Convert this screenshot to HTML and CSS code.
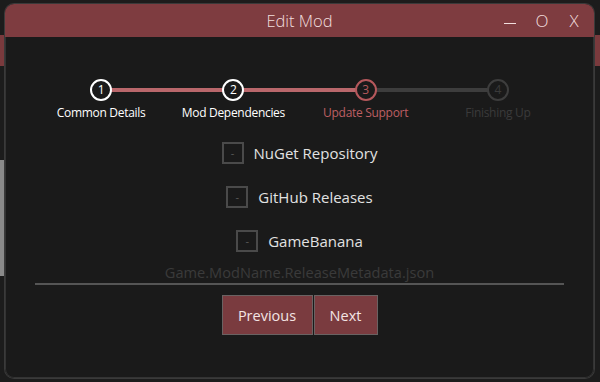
FILE: index.html
```html
<!DOCTYPE html>
<html lang="en">
<head>
<meta charset="utf-8">
<title>Edit Mod</title>
<link rel="stylesheet" href="styles.css">
</head>
<body>
<div class="window">
  <header class="titlebar">
    <div class="tb-side"></div>
    <div class="tb-title">Edit Mod</div>
    <div class="tb-controls">
      <span class="ctl ctl-min"><span class="dash"></span></span>
      <span class="ctl">O</span>
      <span class="ctl">X</span>
    </div>
  </header>
  <main class="content">
    <ol class="stepper">
      <li class="step done"><span class="circle">1</span><span class="label">Common Details</span></li>
      <li class="step done"><span class="circle">2</span><span class="label">Mod Dependencies</span></li>
      <li class="step current"><span class="circle">3</span><span class="label">Update Support</span></li>
      <li class="step todo"><span class="circle">4</span><span class="label">Finishing Up</span></li>
    </ol>
    <div class="options">
      <label class="option"><span class="box">-</span><span class="opt-text">NuGet Repository</span></label>
      <label class="option"><span class="box">-</span><span class="opt-text">GitHub Releases</span></label>
      <label class="option"><span class="box">-</span><span class="opt-text">GameBanana</span></label>
    </div>
    <div class="textbox">Game.ModName.ReleaseMetadata.json</div>
    <div class="buttons">
      <button class="btn btn-prev">Previous</button>
      <button class="btn btn-next">Next</button>
    </div>
  </main>
</div>
</body>
</html>
```
FILE: styles.css
```css
html, body {
  margin: 0;
  padding: 0;
}
body {
  width: 600px;
  height: 382px;
  overflow: hidden;
  background:
    linear-gradient(to bottom, transparent 0, transparent 35px, #7a3a3d 35px, #7a3a3d 66px, transparent 66px),
    linear-gradient(to bottom, transparent 0, transparent 160px, #8a8a8a 160px, #8a8a8a 276px, transparent 276px) left / 5px 100% no-repeat,
    #1c1c1c;
  font-family: "Open Sans", "Noto Sans", sans-serif;
  padding-top: 4px;
  box-sizing: border-box;
}
.window {
  margin-left: 5px;
  width: 589px;
  height: 374px;
  border-radius: 9px;
  overflow: hidden;
  background: #1a1a1a;
  box-shadow: 0 0 0 1px #3a3a3a;
  display: flex;
  flex-direction: column;
}
.titlebar {
  height: 33px;
  flex: none;
  background: #7e3c40;
  display: grid;
  grid-template-columns: 1fr auto 1fr;
  align-items: center;
  color: #f1dede;
}
.tb-title {
  font-size: 16.5px;
  font-weight: 300;
  padding-bottom: 1px;
}
.tb-controls {
  display: flex;
  justify-content: flex-end;
  align-items: center;
  padding-right: 4px;
}
.ctl {
  width: 32px;
  text-align: center;
  font-size: 17px;
  font-weight: 300;
  line-height: 20px;
}
.ctl-min {
  display: flex;
  justify-content: center;
  align-items: center;
  height: 20px;
}
.dash {
  display: block;
  width: 12px;
  height: 1.5px;
  background: #f1dede;
  margin-top: 6px;
}
.content {
  flex: 1;
  border: 1px solid #333;
  border-top: none;
  border-radius: 0 0 9px 9px;
  padding: 0 29px;
  display: flex;
  flex-direction: column;
  align-items: center;
}
.stepper {
  list-style: none;
  margin: 42px 0 0;
  padding: 0;
  width: 100%;
  display: grid;
  grid-template-columns: repeat(4, 1fr);
}
.step {
  position: relative;
  display: flex;
  flex-direction: column;
  align-items: center;
}
.step + .step::before {
  content: "";
  position: absolute;
  top: 9px;
  left: -50%;
  width: 100%;
  height: 4px;
  background: #b9676b;
  z-index: 0;
}
.step.todo::before {
  background: #3d3d3d;
}
.circle {
  position: relative;
  z-index: 1;
  box-sizing: border-box;
  width: 22px;
  height: 22px;
  border-radius: 50%;
  border: 2px solid #ffffff;
  background: #1a1a1a;
  color: #ffffff;
  font-size: 12px;
  line-height: 18px;
  text-align: center;
}
.label {
  margin-top: 4px;
  font-size: 12px;
  font-weight: 500;
  line-height: 16px;
  color: #ffffff;
  white-space: nowrap;
  letter-spacing: -0.3px;
}
.current .circle {
  border-color: #b5585c;
  color: #b5585c;
}
.current .label {
  color: #bd5f63;
}
.todo .circle {
  border-color: #3d3d3d;
  color: #3a3a3a;
}
.todo .label {
  color: #3a3a3a;
}
.options {
  margin-top: 21px;
  display: flex;
  flex-direction: column;
  align-items: center;
  gap: 22px;
}
.option {
  display: flex;
  align-items: center;
  gap: 10px;
  height: 22px;
}
.box {
  box-sizing: border-box;
  width: 22px;
  height: 22px;
  border: 2px solid #4a4a4a;
  color: #5a5a5a;
  font-size: 11px;
  line-height: 17px;
  text-align: center;
}
.opt-text {
  font-size: 15px;
  color: #e2e2e2;
  line-height: 20px;
  padding-bottom: 1px;
}
.textbox {
  margin-top: 10px;
  width: 100%;
  box-sizing: border-box;
  height: 23px;
  border-bottom: 2px solid #555555;
  text-align: center;
  font-size: 14.6px;
  line-height: 20px;
  color: #3a3a3a;
}
.buttons {
  margin-top: 10px;
  display: flex;
  gap: 1px;
}
.btn {
  box-sizing: border-box;
  height: 40px;
  border: 1px solid #6a6262;
  background: #7a3b3f;
  color: #f3e4e4;
  font-family: inherit;
  font-size: 14.5px;
  padding: 0;
}
.btn-prev {
  width: 91px;
}
.btn-next {
  width: 64px;
}
```
